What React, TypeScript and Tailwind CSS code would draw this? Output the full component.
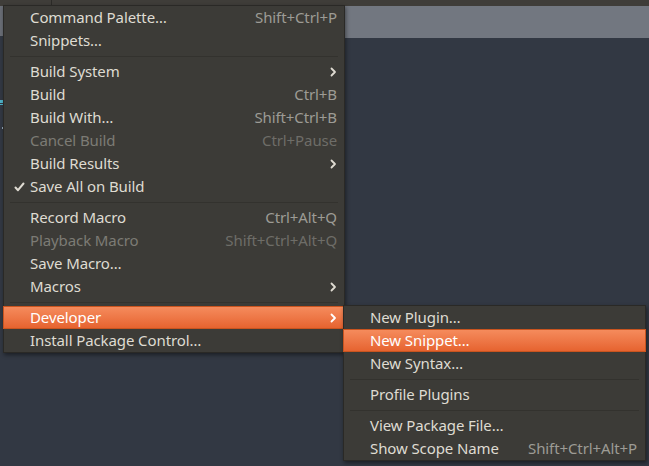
import React from 'react';

type Item =
  | { kind: 'sep' }
  | {
      kind?: 'item';
      label: string;
      shortcut?: string;
      sub?: boolean;
      disabled?: boolean;
      checked?: boolean;
      active?: boolean;
    };

const mainItems: Item[] = [
  { label: 'Command Palette…', shortcut: 'Shift+Ctrl+P' },
  { label: 'Snippets…' },
  { kind: 'sep' },
  { label: 'Build System', sub: true },
  { label: 'Build', shortcut: 'Ctrl+B' },
  { label: 'Build With…', shortcut: 'Shift+Ctrl+B' },
  { label: 'Cancel Build', shortcut: 'Ctrl+Pause', disabled: true },
  { label: 'Build Results', sub: true },
  { label: 'Save All on Build', checked: true },
  { kind: 'sep' },
  { label: 'Record Macro', shortcut: 'Ctrl+Alt+Q' },
  { label: 'Playback Macro', shortcut: 'Shift+Ctrl+Alt+Q', disabled: true },
  { label: 'Save Macro…' },
  { label: 'Macros', sub: true },
  { kind: 'sep' },
  { label: 'Developer', sub: true, active: true },
  { label: 'Install Package Control…' },
];

const devItems: Item[] = [
  { label: 'New Plugin…' },
  { label: 'New Snippet…', active: true },
  { label: 'New Syntax…' },
  { kind: 'sep' },
  { label: 'Profile Plugins' },
  { kind: 'sep' },
  { label: 'View Package File…' },
  { label: 'Show Scope Name', shortcut: 'Shift+Ctrl+Alt+P' },
];

const Chevron: React.FC<{ light?: boolean }> = ({ light }) => (
  <svg width="7" height="10" viewBox="0 0 7 10" className="shrink-0">
    <polyline
      points="1.5,1.5 5,5 1.5,8.5"
      fill="none"
      stroke={light ? '#ffffff' : '#dfdbd2'}
      strokeWidth="1.8"
      strokeLinecap="round"
      strokeLinejoin="round"
    />
  </svg>
);

const Check: React.FC = () => (
  <svg width="11" height="10" viewBox="0 0 11 10" className="absolute left-[10px] top-[7px]">
    <polyline
      points="1.5,5.5 4,8.2 9.5,1.5"
      fill="none"
      stroke="#dfdbd2"
      strokeWidth="2"
      strokeLinecap="round"
      strokeLinejoin="round"
    />
  </svg>
);

const MenuList: React.FC<{ items: Item[]; padRight: string }> = ({ items, padRight }) => (
  <div className="flex flex-col">
    {items.map((it, i) => {
      if (it.kind === 'sep') {
        return (
          <div key={i} className="h-[8px] flex items-center px-[6px]">
            <div className="h-px w-full bg-[#33322e]" />
          </div>
        );
      }
      const textColor = it.active ? 'text-white' : it.disabled ? 'text-[#7c7b75]' : 'text-[#dfdbd2]';
      return (
        <div
          key={i}
          className={`relative h-[23px] flex items-center pl-[26px] ${padRight} ${
            it.active
              ? 'bg-gradient-to-b from-[#f58b5c] to-[#e6632f] border border-[#c9541f] -mx-px'
              : ''
          }`}
        >
          {it.checked && <Check />}
          <span className={`flex-1 ${textColor}`}>{it.label}</span>
          {it.shortcut && (
            <span className={it.disabled ? 'text-[#6e6d68]' : 'text-[#9d9b95]'}>{it.shortcut}</span>
          )}
          {it.sub && <Chevron light={it.active} />}
        </div>
      );
    })}
  </div>
);

export default function App() {
  return (
    <div
      className="relative w-[649px] h-[466px] overflow-hidden bg-[#323843] text-[15px] leading-none tracking-[-0.1px] flex flex-col"
      style={{ fontFamily: '"Noto Sans", "Open Sans", sans-serif' }}
    >
      {/* window top bar */}
      <div className="h-[6px] shrink-0 bg-[#3f3d39] flex">
        <div className="w-[52px] border-r border-[#2c2b28]" />
      </div>

      <div className="flex flex-1">
        {/* left gutter */}
        <div className="w-[4px] flex flex-col">
          <div className="h-[30px] bg-[#6a6e76]" />
          <div className="h-[64px]" />
          <div className="h-[3px] w-[3px] bg-[#4fb3c9]" />
          <div className="h-[1px] mt-[1px] bg-[#4fb3c9]" />
          <div className="h-[22px]" />
          <div className="h-[2px] w-[2px] ml-[2px] bg-[#99aabb]" />
        </div>
        {/* editor area */}
        <div className="flex-1 flex flex-col">
          <div className="h-[32px] bg-[#727780]" />
          <div className="flex-1 bg-[#323843]" />
        </div>
      </div>

      {/* Tools menu */}
      <div className="absolute left-[3px] top-[5px] w-[342px] bg-[#3c3b37] border border-[#2a2926] shadow-[1px_2px_4px_rgba(0,0,0,0.45)]">
        <MenuList items={mainItems} padRight="pr-[7px]" />
      </div>

      {/* Developer submenu */}
      <div className="absolute left-[343px] top-[305px] w-[303px] bg-[#3c3b37] border border-[#2a2926] shadow-[1px_2px_4px_rgba(0,0,0,0.45)]">
        <MenuList items={devItems} padRight="pr-[8px]" />
      </div>
    </div>
  );
}
